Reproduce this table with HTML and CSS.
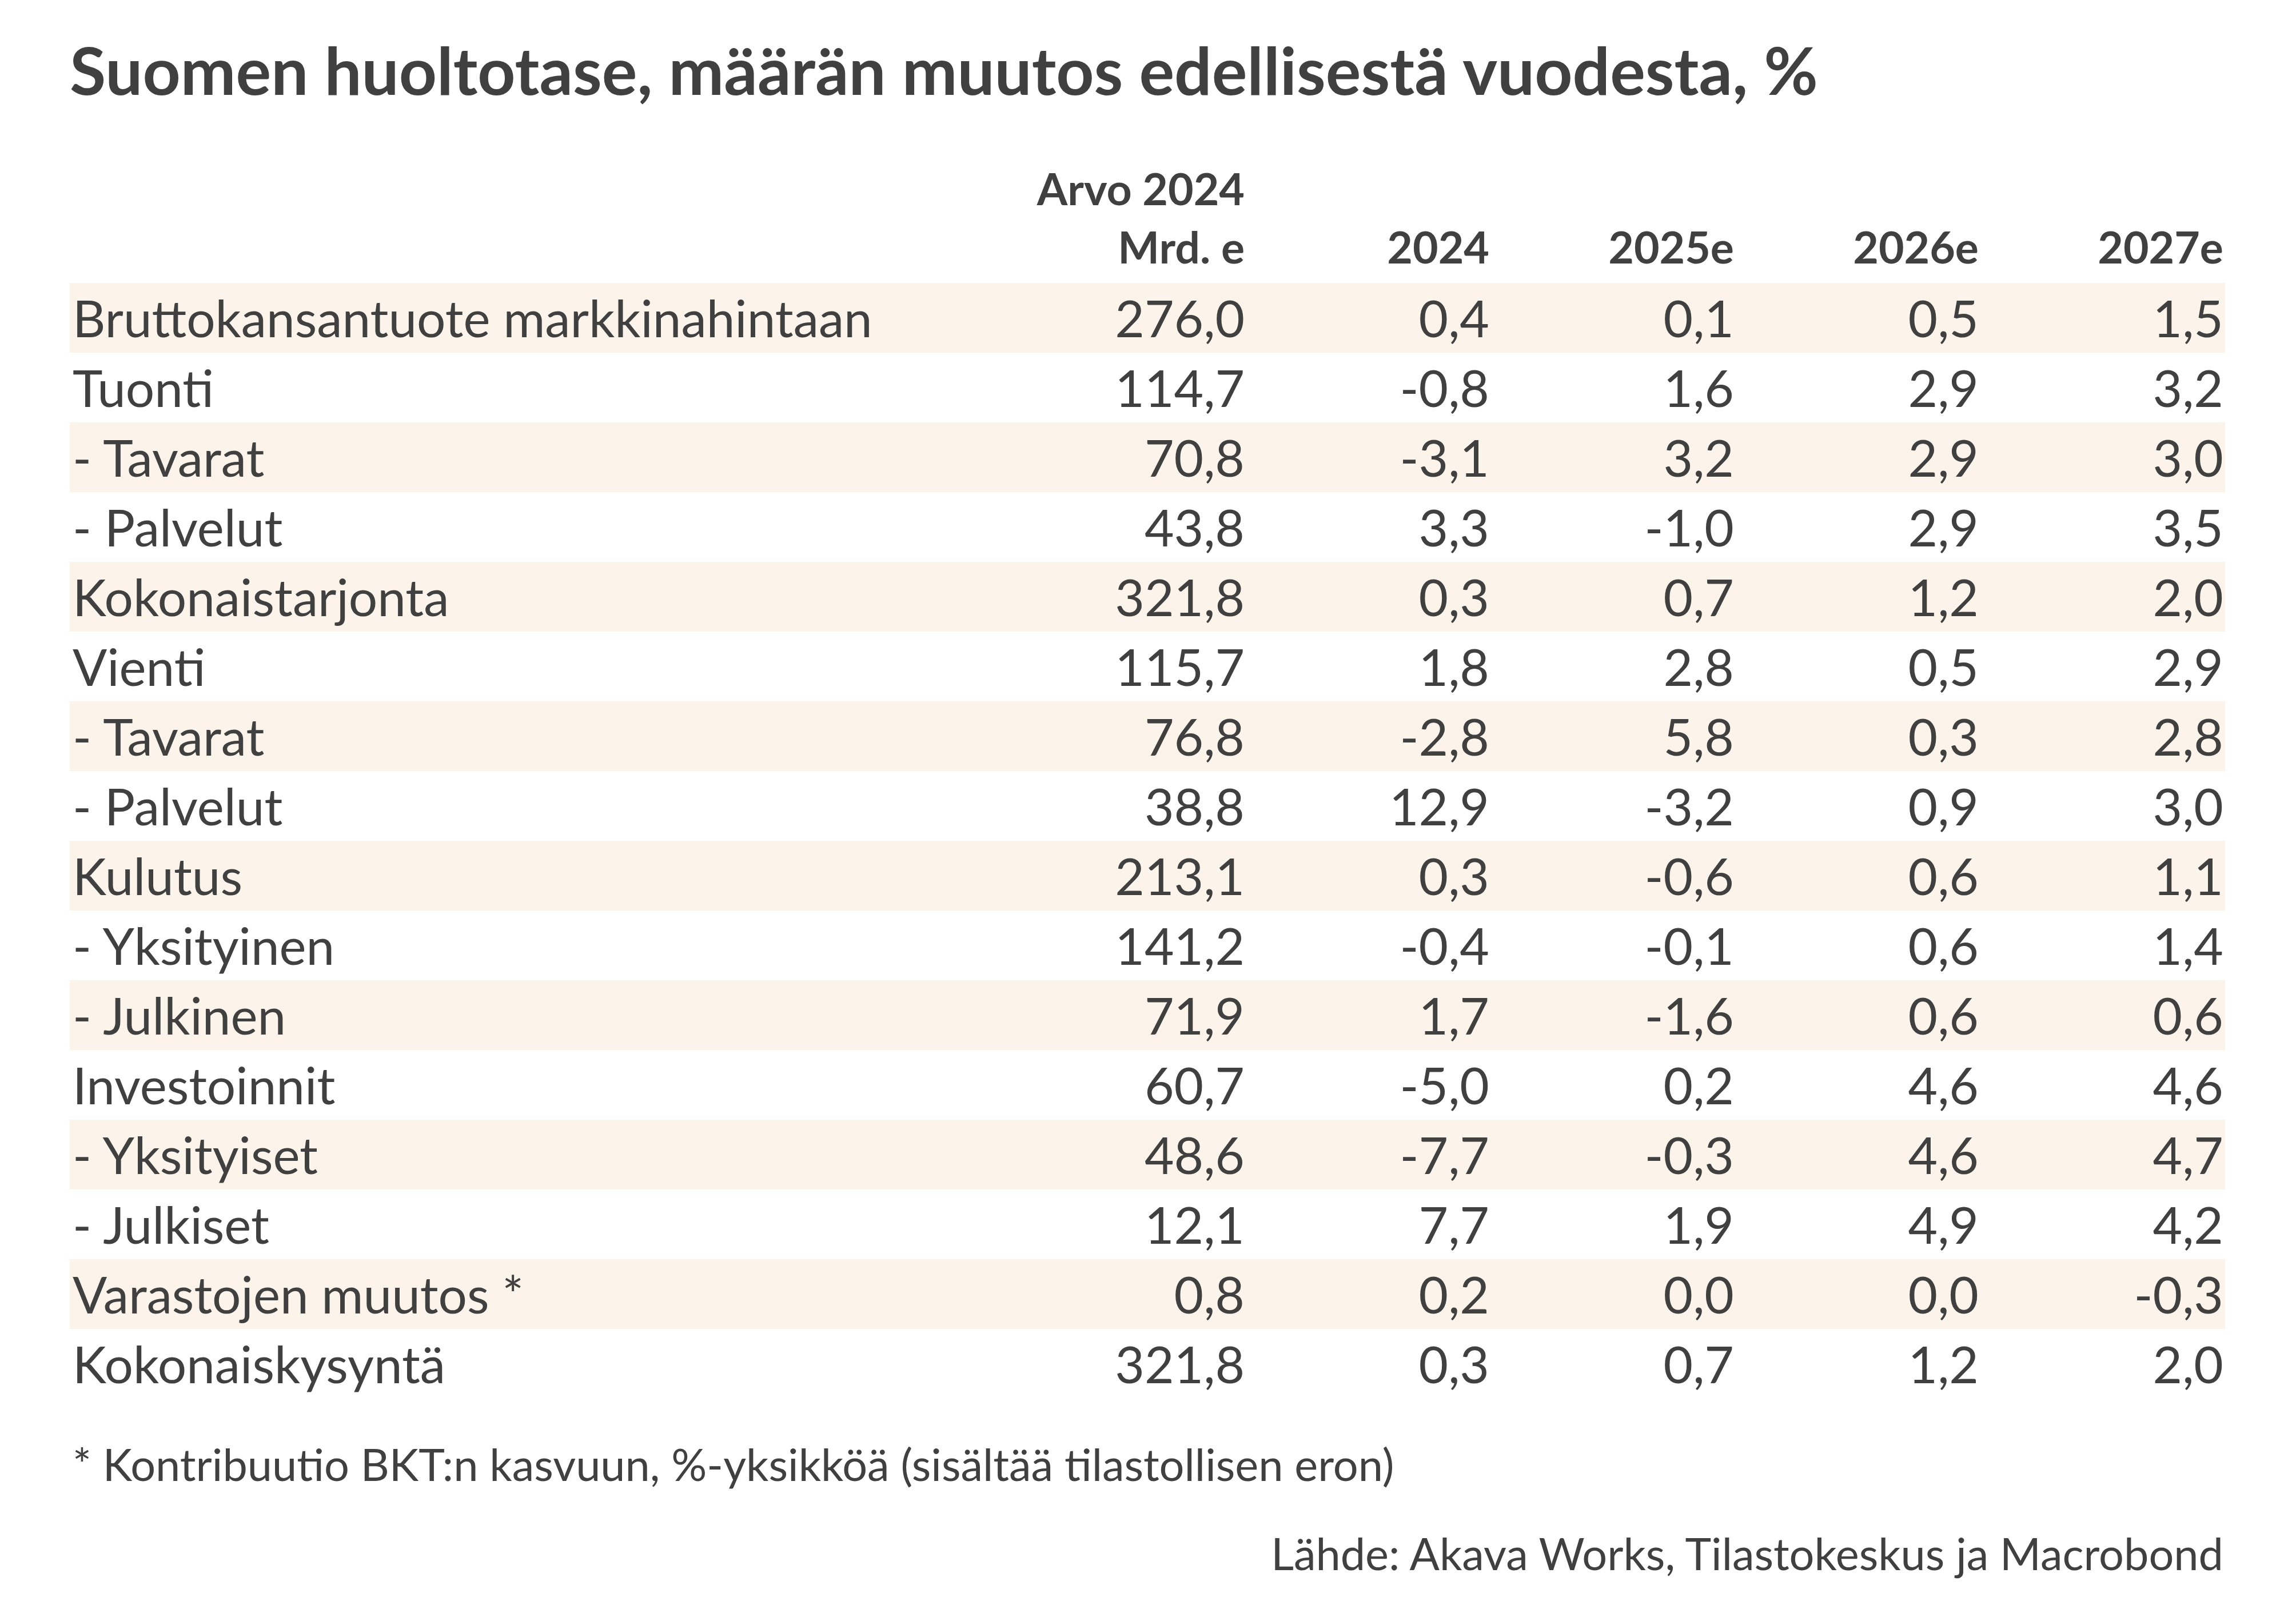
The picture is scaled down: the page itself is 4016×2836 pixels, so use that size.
FILE: index.html
```html
<!DOCTYPE html>
<html lang="fi">
<head>
<meta charset="utf-8">
<title>Suomen huoltotase</title>
<link rel="stylesheet" href="styles.css">
</head>
<body>
<div class="page">
  <h1 class="title">Suomen huoltotase, määrän muutos edellisestä vuodesta, %</h1>
  <div class="table">
    <div class="row head">
      <div class="cell label"></div>
      <div class="cell num">Arvo 2024<br>Mrd. e</div>
      <div class="cell num"><br>2024</div>
      <div class="cell num"><br>2025e</div>
      <div class="cell num"><br>2026e</div>
      <div class="cell num"><br>2027e</div>
    </div>
    <div class="row band"><div class="cell label">Bruttokansantuote markkinahintaan</div><div class="cell num">276,0</div><div class="cell num">0,4</div><div class="cell num">0,1</div><div class="cell num">0,5</div><div class="cell num">1,5</div></div>
    <div class="row"><div class="cell label">Tuonti</div><div class="cell num">114,7</div><div class="cell num">-0,8</div><div class="cell num">1,6</div><div class="cell num">2,9</div><div class="cell num">3,2</div></div>
    <div class="row band"><div class="cell label">- Tavarat</div><div class="cell num">70,8</div><div class="cell num">-3,1</div><div class="cell num">3,2</div><div class="cell num">2,9</div><div class="cell num">3,0</div></div>
    <div class="row"><div class="cell label">- Palvelut</div><div class="cell num">43,8</div><div class="cell num">3,3</div><div class="cell num">-1,0</div><div class="cell num">2,9</div><div class="cell num">3,5</div></div>
    <div class="row band"><div class="cell label">Kokonaistarjonta</div><div class="cell num">321,8</div><div class="cell num">0,3</div><div class="cell num">0,7</div><div class="cell num">1,2</div><div class="cell num">2,0</div></div>
    <div class="row"><div class="cell label">Vienti</div><div class="cell num">115,7</div><div class="cell num">1,8</div><div class="cell num">2,8</div><div class="cell num">0,5</div><div class="cell num">2,9</div></div>
    <div class="row band"><div class="cell label">- Tavarat</div><div class="cell num">76,8</div><div class="cell num">-2,8</div><div class="cell num">5,8</div><div class="cell num">0,3</div><div class="cell num">2,8</div></div>
    <div class="row"><div class="cell label">- Palvelut</div><div class="cell num">38,8</div><div class="cell num">12,9</div><div class="cell num">-3,2</div><div class="cell num">0,9</div><div class="cell num">3,0</div></div>
    <div class="row band"><div class="cell label">Kulutus</div><div class="cell num">213,1</div><div class="cell num">0,3</div><div class="cell num">-0,6</div><div class="cell num">0,6</div><div class="cell num">1,1</div></div>
    <div class="row"><div class="cell label">- Yksityinen</div><div class="cell num">141,2</div><div class="cell num">-0,4</div><div class="cell num">-0,1</div><div class="cell num">0,6</div><div class="cell num">1,4</div></div>
    <div class="row band"><div class="cell label">- Julkinen</div><div class="cell num">71,9</div><div class="cell num">1,7</div><div class="cell num">-1,6</div><div class="cell num">0,6</div><div class="cell num">0,6</div></div>
    <div class="row"><div class="cell label">Investoinnit</div><div class="cell num">60,7</div><div class="cell num">-5,0</div><div class="cell num">0,2</div><div class="cell num">4,6</div><div class="cell num">4,6</div></div>
    <div class="row band"><div class="cell label">- Yksityiset</div><div class="cell num">48,6</div><div class="cell num">-7,7</div><div class="cell num">-0,3</div><div class="cell num">4,6</div><div class="cell num">4,7</div></div>
    <div class="row"><div class="cell label">- Julkiset</div><div class="cell num">12,1</div><div class="cell num">7,7</div><div class="cell num">1,9</div><div class="cell num">4,9</div><div class="cell num">4,2</div></div>
    <div class="row band"><div class="cell label">Varastojen muutos *</div><div class="cell num">0,8</div><div class="cell num">0,2</div><div class="cell num">0,0</div><div class="cell num">0,0</div><div class="cell num">-0,3</div></div>
    <div class="row"><div class="cell label">Kokonaiskysyntä</div><div class="cell num">321,8</div><div class="cell num">0,3</div><div class="cell num">0,7</div><div class="cell num">1,2</div><div class="cell num">2,0</div></div>
  </div>
  <p class="note">* Kontribuutio BKT:n kasvuun, %-yksikköä (sisältää tilastollisen eron)</p>
  <p class="source">Lähde: Akava Works, Tilastokeskus ja Macrobond</p>
</div>
</body>
</html>
```
FILE: styles.css
```css
html, body {
  margin: 0;
  padding: 0;
  background: #ffffff;
}
body {
  font-family: Lato, "Open Sans", "Liberation Sans", sans-serif;
  color: #404040;
}
.page {
  width: 3770px;
  padding: 53px 0 0 122px;
}
.title {
  margin: 0;
  font-size: 115.5px;
  line-height: 1.2;
  font-weight: 700;
}
.table {
  margin-top: 86px;
  display: flex;
  flex-direction: column;
}
.row {
  display: grid;
  grid-template-columns: 1630px repeat(5, 428px);
  height: 122px;
  font-size: 89px;
  line-height: 122px;
}
.row.band {
  background: #fcf3ea;
}
.row.head {
  height: auto;
  font-size: 77px;
  line-height: 102px;
  font-weight: 700;
  margin-bottom: 13px;
}
.cell {
  white-space: nowrap;
}
.cell.label {
  padding-left: 5px;
}
.cell.num {
  text-align: right;
  padding-right: 3px;
}
.note {
  margin: 65px 0 0 0;
  font-size: 77.5px;
  line-height: 100px;
  padding-left: 5px;
}
.source {
  margin: 56px 0 0 0;
  font-size: 77.5px;
  line-height: 100px;
  text-align: right;
  padding-right: 3px;
}
```
